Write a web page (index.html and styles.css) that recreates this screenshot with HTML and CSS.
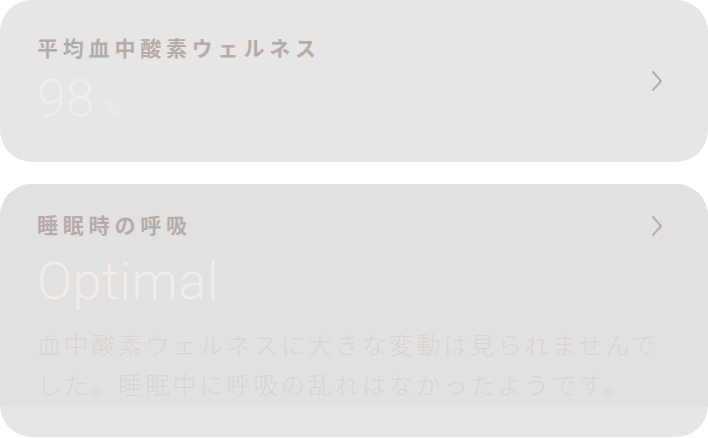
FILE: index.html
```html
<!DOCTYPE html>
<html lang="ja">

<head>
    <meta charset="utf-8">
    <title>呼吸の状態</title>
    <!--Stylesheet-->
    <link rel="stylesheet" href="styles.css">
</head>

<body>
    <div class="card summary">
        <div class="card-main">
            <p class="label">平均血中酸素ウェルネス</p>
            <p class="value">98<span class="unit">%</span></p>
        </div>
        <svg class="chevron" width="14" height="22" viewBox="0 0 14 22">
            <polyline points="3,2 11,11 3,20" />
        </svg>
    </div>

    <div class="card detail">
        <div class="card-body">
            <div class="card-head">
                <p class="label">睡眠時の呼吸</p>
                <svg class="chevron" width="14" height="22" viewBox="0 0 14 22">
                    <polyline points="3,2 11,11 3,20" />
                </svg>
            </div>
            <p class="status">Optimal</p>
            <p class="note">血中酸素ウェルネスに大きな変動は見られませんでした。睡眠中に呼吸の乱れはなかったようです。</p>
        </div>
    </div>
</body>

</html>
```

FILE: styles.css
```css
*,
*:before,
*:after {
    padding: 0;
    margin: 0;
    box-sizing: border-box;
}

body {
    background: #ffffff;
    font-family: Roboto, "Noto Sans CJK JP", sans-serif;
}

.card {
    background-color: #e6e6e6;
    border-radius: 32px;
    overflow: hidden;
}

.label {
    font-family: "Noto Sans CJK JP", sans-serif;
    font-size: 21px;
    font-weight: 700;
    letter-spacing: 4.8px;
    line-height: 28px;
    color: #b7aba6;
}

.chevron {
    flex: none;
}

.chevron polyline {
    fill: none;
    stroke: #b9aca6;
    stroke-width: 2;
    stroke-linecap: round;
    stroke-linejoin: round;
}

/* top card */
.summary {
    height: 162px;
    display: flex;
    align-items: center;
    justify-content: space-between;
    padding: 0 44px 0 37px;
}

.card-main {
    align-self: flex-start;
    padding-top: 33px;
}

.value {
    margin-top: 10px;
    font-size: 52px;
    font-weight: 300;
    line-height: 56px;
    color: #f4ece7;
}

.unit {
    font-size: 22px;
    margin-left: 10px;
}

/* bottom card */
.detail {
    margin-top: 22px;
    height: 253px;
}

.card-body {
    background-color: #e1e1e1;
    height: 223px;
    padding: 26px 44px 0 37px;
}

.card-head {
    display: flex;
    align-items: center;
    justify-content: space-between;
}

.card-head .chevron {
    margin-top: 4px;
}

.status {
    margin-top: 15px;
    font-size: 52px;
    font-weight: 300;
    letter-spacing: 0.6px;
    line-height: 58px;
    color: #f4ece7;
}

.note {
    margin-top: 13px;
    font-family: "Noto Sans CJK JP", sans-serif;
    font-size: 24px;
    font-weight: 300;
    letter-spacing: 3.1px;
    line-height: 40px;
    color: #dcd2cd;
}
```
